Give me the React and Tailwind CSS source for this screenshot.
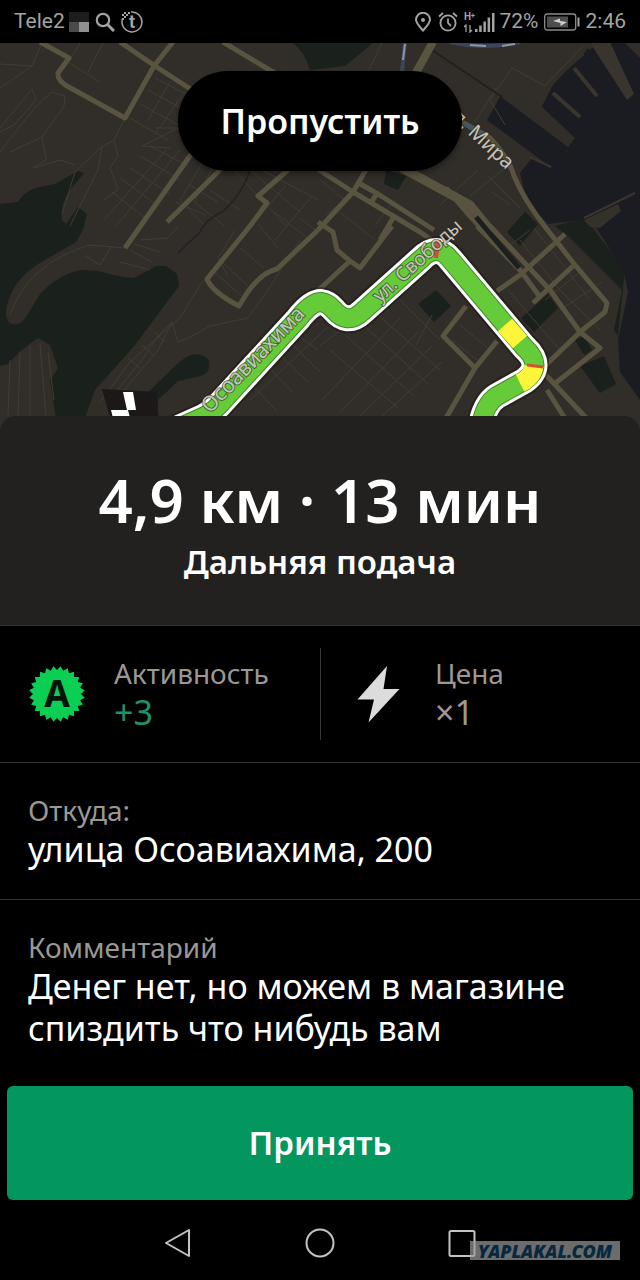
const majorRoads = [
  "M40 42 L69 58 L58 73 Q57 80 67 86 L125 118 L154 66 L173 42",
  "M120 42 L155 66 L192 90",
  "M223 42 L278 75",
  "M192 153 L125 248",
  "M222 168 L167 222",
  "M288 170 L258 196 L267 203 L250 226 L207 279 Q212 292 239 306 L247 293 Q262 272 277 269 L318 230",
  "M312 296 L350 261 L360 268 L392 226",
  "M318 222 L333 232 L337 250 L350 261",
  "M316 168 L353 192 L420 232 L440 246",
  "M367 168 L353 192 L318 230",
  "M357 182 L378 194 L434 230",
  "M370 204 L378 192",
  "M380 240 L393 218",
  "M477 226 L520 270 L540 297",
  "M490 226 L550 290 L580 332 L600 348 L553 385",
  "M497 291 L520 275 L565 234",
  "M533 303 L573 266",
  "M580 332 L546 365",
  "M466 306 L443 336 L475 368 L497 341",
  "M475 368 L446 418",
  "M545 374 L588 420",
  "M547 390 L566 420",
];

const minorRoads = [
  "M80 43 L68 62 L100 82",
  "M103 43 L88 72",
  "M0 64 L32 66 L42 43",
  "M32 66 L0 88",
  "M0 128 L32 89 L36 100 L15 124 L0 132",
  "M0 152 L25 120 L38 104 L52 92 L65 96 L64 106 L42 137 L10 152",
  "M42 137 L46 160 L33 168 L60 160 L75 165",
  "M155 78 L190 96", "M148 90 L188 112", "M140 104 L180 126", "M130 118 L168 140",
  "M170 82 L148 120", "M186 90 L155 134",
  "M125 118 L114 140 L100 148 L75 172 L62 214",
  "M102 146 L98 170 L70 226",
  "M114 140 L118 156 L110 168 L118 190 L104 200",
  "M155 128 L178 128 L142 146 L170 148",
  "M150 146 L188 166", "M140 156 L180 180", "M130 168 L170 194", "M120 178 L158 206", "M112 192 L148 220",
  "M166 150 L104 220", "M180 150 L116 226",
  "M203 162 L180 200 L205 226", "M218 158 L194 202 L225 226", "M188 184 L218 202", "M176 202 L205 215",
  "M232 168 L286 226", "M245 166 L300 212", "M210 190 L240 210",
  "M262 170 L318 200", "M285 186 L260 216", "M312 196 L275 240", "M274 212 L310 240",
  "M235 230 L218 258 L228 276", "M258 224 L278 248", "M240 248 L264 268", "M222 262 L252 290", "M300 218 L315 230", "M212 270 L246 300",
  "M85 256 L100 265 L112 246", "M130 250 L152 262", "M134 244 L160 252", "M140 240 L168 238 L178 226", "M120 262 L150 270",
  "M10 314 Q30 262 90 245 L125 248",
  "M100 402 L130 362 L180 318 L200 285 L215 270",
  "M108 402 L142 360 L158 336 L172 322 L158 350 L120 395",
  "M128 358 L140 368", "M142 345 L154 356", "M154 332 L165 342",
  "M172 322 L178 342 L192 336 L210 326 L248 318 L268 290 L300 240",
  "M10 360 L8 416", "M20 352 L18 416", "M30 345 L30 416", "M40 344 L46 416", "M48 352 L54 400",
  "M228 375 L290 330 L318 350", "M250 400 L330 325", "M262 360 L292 392", "M275 350 L308 382", "M288 340 L320 372", "M245 378 L276 410",
  "M320 345 L370 310 L415 285", "M330 350 L398 408", "M345 335 L414 396", "M360 322 L428 384", "M375 312 L440 370",
  "M322 400 L400 318", "M340 412 L418 332", "M360 416 L432 346", "M382 416 L442 362",
  "M400 300 L440 340", "M412 284 L425 260", "M432 315 L416 345",
  "M440 205 L478 170", "M470 196 L505 168", "M492 192 L510 205", "M488 176 L520 208",
  "M505 125 L490 100 L512 68 L545 86 L583 46",
  "M380 80 L368 72 L382 43", "M475 122 L496 88",
  "M520 240 L560 290 L600 330", "M534 228 L590 300", "M504 250 L530 230", "M560 310 L602 282", "M545 300 L585 268",
  "M460 325 L490 350", "M452 340 L482 364", "M508 290 L560 350",
  "M320 180 L345 200 L325 215", "M340 212 L375 240", "M395 200 L375 225",
];

const routePath =
  "M174 430 L203 417 Q212 413 220 404 L298 319 Q311 302 321 302 Q328 303 333 309 Q347 326 362 312 L421 259 Q437 243 450 259 L524 347 Q545 366 524 381 L497 396 Q484 404 480 430";

function CityMap() {
  return (
    <svg
      className="block h-[389px] w-full bg-[#312d28]"
      viewBox="0 43 640 389"
      preserveAspectRatio="xMidYMin slice"
      role="img"
      aria-label="Карта маршрута"
    >
      <g fill="#1a201c">
        <path d="M0 204 L18 202 Q26 188 45 186 L55 184 L78 171 L84 173 L70 190 Q60 205 62 220 L66 224 L78 207 L87 214 L83 230 L76 242 L38 264 Q14 280 8 302 Q3 316 10 323 Q20 328 28 314 L40 294 Q58 275 80 270 L98 271 Q122 278 134 278 L156 266 L166 266 L177 274 L179 286 L135 345 L95 390 L80 432 L58 432 L50 380 L58 368 L50 345 L38 338 Q20 350 8 364 L0 366 Z" />
        <path d="M140 400 L175 366 Q195 346 209 360 Q211 374 200 376 L178 381 L158 400 L158 420 H140 Z" />
        <path d="M292 42 Q305 52 310 70 L345 66 L374 42 Z" />
        <path d="M386 170 L406 176 L398 190 L384 184 Z" />
        <path d="M418 304 L436 290 L451 306 L434 322 Z" />
        <path d="M521 318 L548 294 L558 308 L534 332 Z" />
        <path d="M575 340 L584 336 L592 350 L584 355 Z" />
        <path d="M580 366 L604 356 L616 384 L600 393 Z" />
        <path d="M507 232 L525 212 L538 224 L520 246 Z" />
        <path d="M555 226 L585 218 L625 270 L618 336 L614 330 L622 290 L570 238 Z" />
      </g>
      <path
        fill="#1b1b22"
        d="M590 50 L565 72 L553 85 L540 110 L575 138 L568 147 L501 95 L487 120 L510 137 L552 168 L533 157 L520 173 L527 202 L548 224 L583 220 L595 226 L604 240 L624 272 L628 292 L618 340 L620 372 L640 400 V42 H598 Z"
      />
      <path d="M584 220 L618 204 L621 211 L600 228 L590 227 Z" fill="#34302a" />
      <g fill="none" stroke="#3a362e" strokeWidth="4">
        <path d="M553 93 L580 117" />
        <path d="M574 68 L597 96" />
        <path d="M530 157 L551 167" strokeWidth="2" />
        <path d="M584 218 L635 193" strokeWidth="2" />
      </g>
      <path d="M540 105 L575 138 L568 147 L501 97 L512 82 Z" fill="#312d28" />
      <path d="M590 42 L610 42 L634 94 L627 100 L596 52 Z" fill="#39352e" />
      <path d="M624 42 H640 V58 Z" fill="#312d28" />
      <path d="M590 50 L586 56" stroke="#1b1b22" strokeWidth="6" />

      <g fill="none" stroke="#413d34" strokeWidth="1" strokeLinejoin="round">
        {minorRoads.map((d) => (
          <path key={d} d={d} />
        ))}
      </g>

      <path d="M250 170 Q242 195 222 212 Q205 220 200 232 L178 253" fill="none" stroke="#24201f" strokeWidth="1.5" />
      <path d="M432 50 L502 97" fill="none" stroke="#241f1d" strokeWidth="2" />

      <g fill="none" stroke="#58543f" strokeWidth="5" strokeLinejoin="round">
        {majorRoads.map((d) => (
          <path key={d} d={d} />
        ))}
        <path d="M433 42 L413 78" strokeWidth="8" />
        <path d="M402 168 L470 205 L492 232" strokeWidth="9" />
        <path d="M446 188 L470 216 L520 270" strokeWidth="5" />
        <path d="M462 122 L490 138 Q510 160 514 176 Q524 200 546 228 L575 265 L607 303 L605 312 L580 332" strokeWidth="5" />
      </g>
      <path d="M476 217 L519 268" stroke="#1a201c" strokeWidth="5" />

      <g fill="none">
        <path d="M405 42 L402 72" stroke="#3b465c" strokeWidth="4" />
        <path d="M405 44 L403 60" stroke="#8d95a6" strokeWidth="2" />
        <path d="M450 42 Q485 50 520 42" stroke="#3b465c" strokeWidth="4" />
        <path d="M470 45 L486 46 M502 46 L515 44" stroke="#8d95a6" strokeWidth="2" />
        <path d="M465 124 L487 136" stroke="#4c5366" strokeWidth="5" />
      </g>

      <g fill="none" strokeLinejoin="round">
        <path d={routePath} stroke="#141210" strokeOpacity="0.4" strokeWidth="30" />
        <path d={routePath} stroke="#ffffff" strokeWidth="26" />
        <path d={routePath} stroke="#3f8a25" strokeWidth="20" />
        <path d={routePath} stroke="#66cb38" strokeWidth="18" />
        <path d="M505 325 L520 342" stroke="#fbf63a" strokeWidth="19" />
        <path d="M534 366 Q533 375 524 381 L520 383" stroke="#fbf63a" strokeWidth="19" />
        <path d="M527 365 L543 367" stroke="#d9512c" strokeWidth="3" />
        <path d="M435 240 L441 240 L438 258 L434 258 Z" fill="#d2503a" />
      </g>

      <g>
        <path d="M102 389 L156 392 L160 432 H114 Z" fill="#1b1817" />
        <path d="M123 392 L133 392 L136 410 H127 Z" fill="#fff" />
        <path d="M111 410 H128 L131 422 H114 Z" fill="#fff" />
      </g>

      <g
        className="font-['Noto_Sans',sans-serif]"
        fill="#c4c4bd"
        stroke="#2b2a26"
        strokeOpacity="0.6"
        strokeWidth="2"
        paintOrder="stroke"
      >
        <text className="text-[21px]" transform="translate(210 414) rotate(-46)">Осоавиахима</text>
        <text className="text-[19px]" transform="translate(380 303) rotate(-42)">ул. Свободы</text>
        <text className="text-[20px]" transform="translate(444 112) rotate(43)">ул. Мира</text>
      </g>
    </svg>
  );
}

function StatusBar() {
  return (
    <header className="flex h-[43px] items-center justify-between bg-black px-[14px] font-['Roboto',sans-serif] text-[21px] leading-none text-[#a3a3a3]">
      <div className="flex items-center">
        <span>Tele2</span>
        <svg className="ml-1 h-5 w-5" viewBox="0 0 20 20" aria-hidden="true">
          <path d="M0 0H20V10H0Z" fill="#1d1d1d" />
          <path d="M0 10H10V20H0Z" fill="#4a4a4a" />
          <path d="M10 10H20V20H10Z" fill="#909090" />
        </svg>
        <svg className="ml-[6px] h-5 w-5" viewBox="0 0 20 20" fill="none" stroke="currentColor" aria-hidden="true">
          <circle cx="8" cy="8" r="6.2" strokeWidth="2.2" />
          <path d="M12.5 12.5L19 19" strokeWidth="3" />
        </svg>
        <svg className="ml-[6px] h-[22px] w-[22px]" viewBox="0 0 22 22" aria-hidden="true">
          <path d="M10 1A10 10 0 1 1 1.4 8" fill="none" stroke="currentColor" strokeWidth="1.5" />
          <path d="M1 3h2v2H1zM3 5h2v2H3zM5 3h2v2H5zM3 1h2v2H3zM7 1h2v2H7zM1 7h2v2H1z" fill="currentColor" />
          <text x="11" y="17" textAnchor="middle" fill="currentColor" className="text-[18px] font-bold">t</text>
        </svg>
      </div>
      <div className="flex items-center">
        <svg className="h-5 w-4" viewBox="0 0 16 20" fill="none" stroke="currentColor" aria-hidden="true">
          <path d="M8 18.5C4 14 1 11 1 7.800A7 7 0 0 1 15 7.800C15 11 12 14 8 18.500Z" strokeWidth="2" />
          <circle cx="8" cy="8" r="2" fill="currentColor" stroke="none" />
        </svg>
        <svg className="ml-[7px] h-5 w-5" viewBox="0 0 20 20" fill="none" stroke="currentColor" strokeWidth="1.8" aria-hidden="true">
          <circle cx="10" cy="11" r="7.600" />
          <path d="M10 6.500V11L13 14M1 4.500L5 1M19 4.500L15 1" />
        </svg>
        <svg className="ml-[6px] h-[22px] w-8" viewBox="0 0 32 22" fill="currentColor" aria-hidden="true">
          <text x="0" y="9" className="text-[10px] font-bold">H</text>
          <text x="7" y="7" className="text-[7px] font-bold">+</text>
          <path d="M2 21V14L0 16M6 14V21L8 19" fill="none" stroke="currentColor" strokeWidth="1.300" />
          <path d="M11 18h2.500v3H11zM15.200 14.500h2.500V21h-2.500zM19.400 10.500h2.500V21h-2.500zM23.600 6.500h2.500V21h-2.500zM28 2h2.500v19H28z" />
        </svg>
        <span className="ml-[4px]">72%</span>
        <svg className="ml-[5px] h-[18px] w-9" viewBox="0 0 36 18" aria-hidden="true">
          <rect x="0.700" y="1" width="31" height="16" rx="2.500" fill="none" stroke="#8c8c8c" strokeWidth="1.300" />
          <rect x="3" y="3.500" width="21" height="11" fill="#4e4e4e" />
          <path d="M9 8L16 5.500L16 8L23 9L16.500 13L16.500 10Z" fill="#d0d0d0" />
          <path d="M34.500 4.500V13.500" stroke="#a3a3a3" strokeWidth="2" />
        </svg>
        <span className="ml-[6px]">2:46</span>
      </div>
    </header>
  );
}

const badgePoints = Array.from({ length: 48 }, (_, i) => {
  const radius = i % 2 === 0 ? 28 : 24;
  const angle = (Math.PI * (i + 1)) / 24;
  return `${29 + radius * Math.cos(angle)},${29 + radius * Math.sin(angle)}`;
}).join(" ");

function ActivityBadge() {
  return (
    <svg className="h-[58px] w-[58px] shrink-0" viewBox="0 0 58 58" aria-hidden="true">
      <polygon points={badgePoints} fill="#0bcf52" />
      <text x="29" y="42" textAnchor="middle" fill="#04140a" className="font-['Noto_Sans',sans-serif] text-[37px] font-bold">
        A
      </text>
    </svg>
  );
}

function BoltIcon() {
  return (
    <svg className="h-[58px] w-[58px] shrink-0" viewBox="0 0 58 58" aria-hidden="true">
      <path d="M38 1L8.500 34.500H25L19.500 57.500L50.500 24H34.500Z" fill="#dcdcdc" />
    </svg>
  );
}

function Field({ label, value, valueClass = "text-white" }) {
  return (
    <div>
      <dt className="text-[28px] leading-9 text-[#9b9893]">{label}</dt>
      <dd className={`text-[34px] leading-[42px] ${valueClass}`}>{value}</dd>
    </div>
  );
}

export default function App() {
  return (
    <div className="flex min-h-screen flex-col bg-black font-['Noto_Sans',sans-serif] text-white">
      <StatusBar />
      <main className="flex flex-1 flex-col">
        <div className="relative">
          <CityMap />
          <div className="absolute inset-x-0 top-7 flex justify-center">
            <button type="button" className="h-[100px] rounded-full bg-black px-[42px] text-[34px] font-semibold shadow-md shadow-black/30">
              Пропустить
            </button>
          </div>
        </div>

        <section className="relative -mt-4 rounded-t-2xl border-b border-[#383735] bg-[#22211f] px-7 pt-12 pb-[41px] text-center">
          <h1 className="text-[60px] leading-[72px] font-semibold">4,9 км · 13 мин</h1>
          <p className="mt-1 text-[33px] leading-[44px] font-semibold">Дальняя подача</p>
        </section>

        <dl>
          <div className="grid grid-cols-2 border-b border-[#343434]">
            <div className="flex items-center gap-7 py-[29px] pl-7">
              <ActivityBadge />
              <Field label="Активность" value="+3" valueClass="text-[#1e9466]" />
            </div>
            <div className="flex py-[22px]">
              <div className="flex flex-1 items-center gap-7 border-l border-[#383838] pl-7">
                <BoltIcon />
                <Field label="Цена" value="×1" valueClass="text-[#9b9893]" />
              </div>
            </div>
          </div>
          <div className="border-b border-[#343434] px-7 py-[29px]">
            <Field label="Откуда:" value="улица Осоавиахима, 200" />
          </div>
          <div className="px-7 py-[29px]">
            <Field label="Комментарий" value="Денег нет, но можем в магазине спиздить что нибудь вам" />
          </div>
        </dl>

        <div className="mt-auto px-[7px]">
          <button type="button" className="h-[114px] w-full rounded-md bg-[#03965e] text-[33px] font-semibold">
            Принять
          </button>
        </div>
      </main>

      <nav className="relative flex h-20 items-center justify-center gap-28 pt-[6px] text-[#c4c4c4]">
        <button type="button" aria-label="Назад">
          <svg className="block h-8 w-[30px]" viewBox="0 0 30 32" fill="none" stroke="currentColor" strokeWidth="2" strokeLinejoin="round">
            <path d="M26 3V29L3 16Z" />
          </svg>
        </button>
        <button type="button" aria-label="Домой">
          <svg className="block h-8 w-[30px]" viewBox="0 0 30 32" fill="none" stroke="currentColor" strokeWidth="2">
            <circle cx="15" cy="16" r="13.500" />
          </svg>
        </button>
        <button type="button" aria-label="Недавние">
          <svg className="block h-8 w-[30px]" viewBox="0 0 30 32" fill="none" stroke="currentColor" strokeWidth="2">
            <rect x="2.500" y="4" width="25" height="25" rx="1.500" />
          </svg>
        </button>
        <span className="absolute right-5 bottom-5 flex h-[19px] w-[150px] items-center justify-center bg-[#9a9a9a]/70 font-['Noto_Sans',sans-serif] text-[18px] leading-none font-black text-[#06293f] italic">
          YAPLAKAL.COM
        </span>
      </nav>
    </div>
  );
}
